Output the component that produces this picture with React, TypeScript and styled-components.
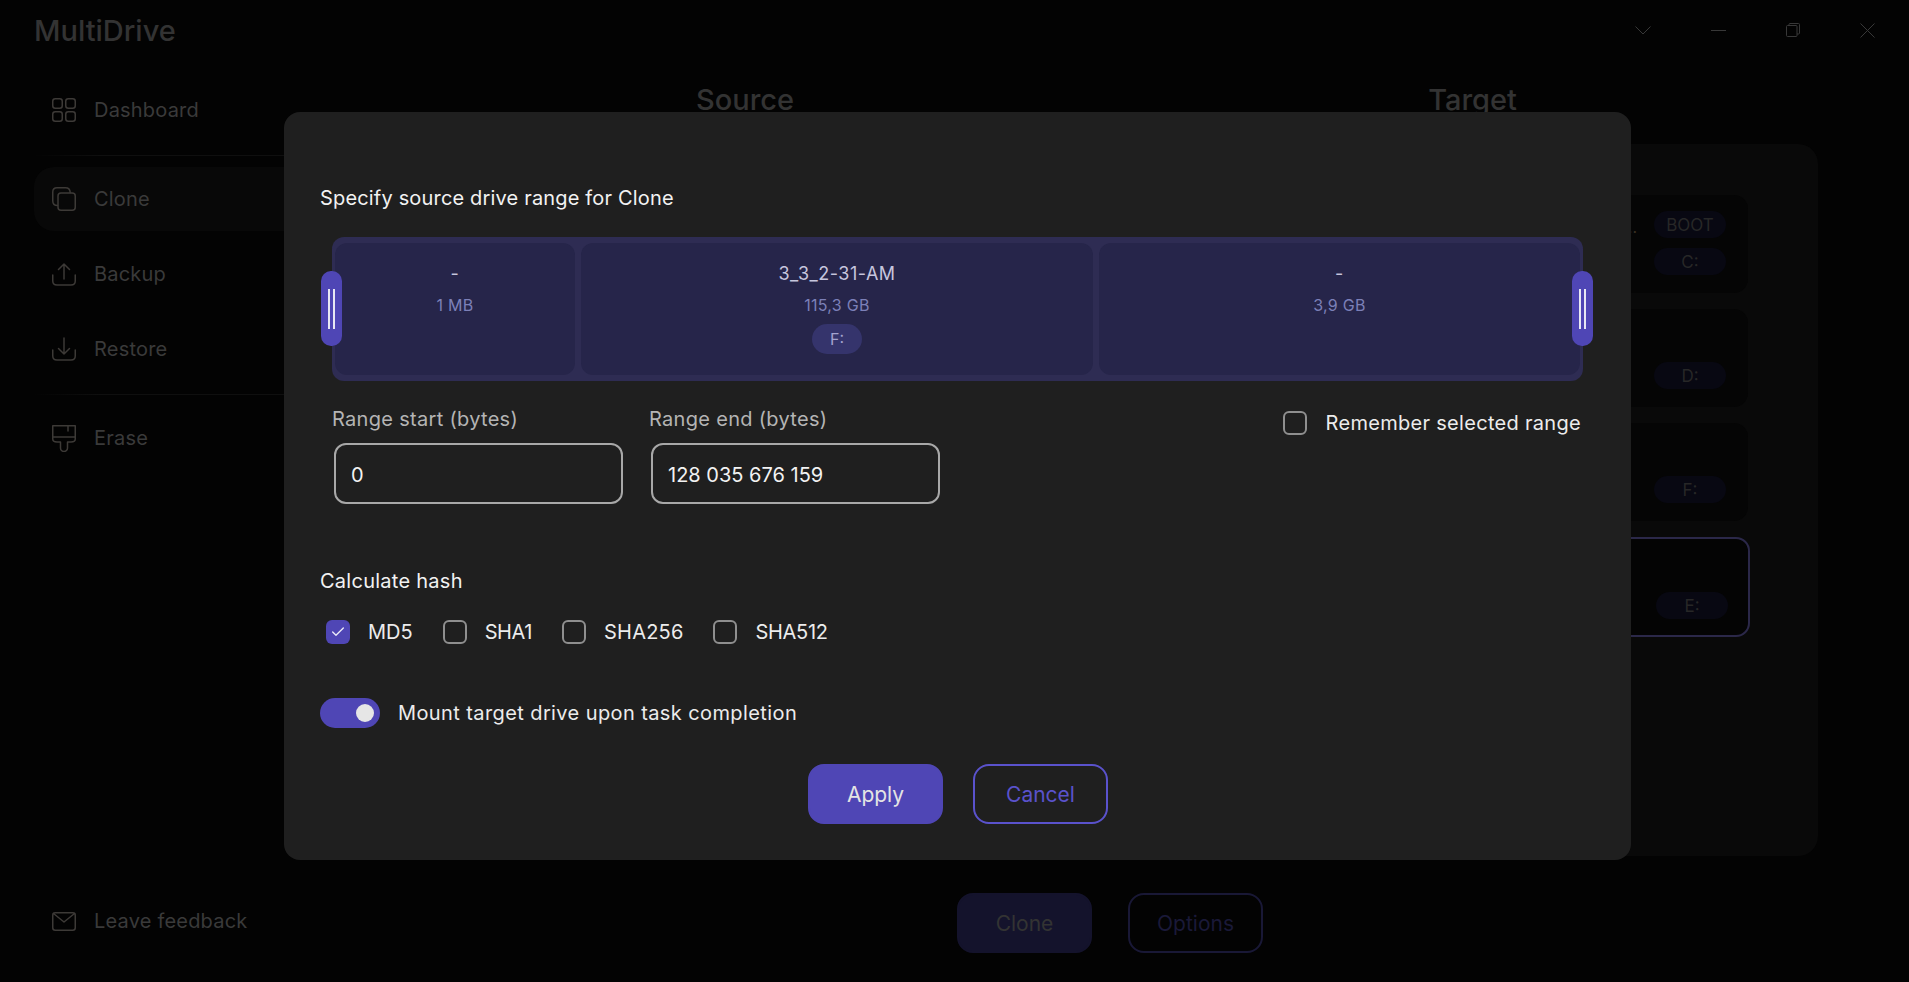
import React from "react";
import styled, { createGlobalStyle } from "styled-components";
import { Check } from "lucide-react";

const font = `"Inter", "Noto Sans", sans-serif`;

const Global = createGlobalStyle`
  html, body { margin: 0; padding: 0; background: #030303; }
  body { font-family: ${font}; color: #f0f0f0; overflow: hidden; }
  * { box-sizing: border-box; }
`;

const Page = styled.div`
  position: relative;
  width: 1909px;
  height: 982px;
  display: flex;
  flex-direction: column;
  background: #030303;
  overflow: hidden;
`;

const TitleBar = styled.header`
  height: 60px;
  display: flex;
  align-items: center;
  padding-left: 34px;
  flex: none;
`;

const Brand = styled.div`
  font-size: 29px;
  font-weight: 500;
  color: #333333;
  flex: 1;
`;

const WindowButtons = styled.div`
  display: flex;
  align-items: center;
  gap: 60px;
  padding-right: 34px;
`;

const WindowIcon = styled.svg`
  flex: none;
  fill: none;
  stroke: #383838;
  stroke-width: 1;
`;

const Body = styled.div`
  flex: 1;
  display: flex;
  min-height: 0;
`;

const Sidebar = styled.nav`
  width: 300px;
  flex: none;
  display: flex;
  flex-direction: column;
  padding: 25px 0 36px 34px;
`;

const NavRow = styled.div<{ $active?: boolean; $gapBelow?: number; $gapAbove?: number }>`
  height: ${(p) => (p.$active ? 64 : 50)}px;
  display: flex;
  align-items: center;
  gap: 18px;
  padding-left: 18px;
  font-size: 20px;
  letter-spacing: 0.2px;
  color: #3a3a3a;
  border-radius: 20px 0 0 20px;
  background: ${(p) => (p.$active ? "#080808" : "transparent")};
  margin-top: ${(p) => p.$gapAbove ?? 0}px;
  margin-bottom: ${(p) => p.$gapBelow ?? 0}px;
`;

const NavIcon = styled.svg`
  flex: none;
  fill: none;
  stroke: #3d3a37;
  stroke-width: 1.5;
  stroke-linecap: round;
  stroke-linejoin: round;
`;

const Divider = styled.div<{ $after: number; $before: number }>`
  height: 1px;
  background: linear-gradient(90deg, #030303, #0f0f0f 25%);
  margin: ${(p) => p.$before}px 0 ${(p) => p.$after}px 0;
`;

const SidebarSpacer = styled.div`
  flex: 1;
`;

const Main = styled.main`
  flex: 1;
  display: flex;
  flex-direction: column;
`;

const Columns = styled.div`
  display: flex;
  padding-left: 396px;
  gap: 634px;
  height: 84px;
  padding-top: 22px;
`;

const ColumnTitle = styled.h2`
  margin: 0;
  font-size: 29px;
  font-weight: 500;
  color: #333333;
`;

const TargetPanel = styled.section`
  margin-left: 780px;
  width: 738px;
  height: 712px;
  background: #090909;
  border-radius: 20px;
  display: flex;
  flex-direction: column;
  align-items: flex-end;
  gap: 16px;
  padding: 51px 70px 0 0;
`;

const DriveCard = styled.div<{ $selected?: boolean }>`
  width: 500px;
  height: ${(p) => (p.$selected ? 100 : 98)}px;
  margin-right: ${(p) => (p.$selected ? -2 : 0)}px;
  background: ${(p) => (p.$selected ? "#040404" : "#050505")};
  border: 2px solid ${(p) => (p.$selected ? "#2b2849" : "transparent")};
  border-radius: 14px;
  display: flex;
  flex-direction: column;
  align-items: flex-end;
  justify-content: flex-end;
  gap: 10px;
  padding: 0 20px 16px 0;
`;

const PillRow = styled.div`
  display: flex;
  align-items: center;
  gap: 17px;
`;

const Truncated = styled.span`
  font-size: 16px;
  margin-top: 4px;
  color: #3a3024;
`;

const DrivePill = styled.span`
  width: 72px;
  height: 27px;
  border-radius: 14px;
  background: #080812;
  color: #272727;
  font-size: 17px;
  display: flex;
  align-items: center;
  justify-content: center;
`;

const Actions = styled.div`
  margin-top: 37px;
  padding-left: 657px;
  display: flex;
  gap: 36px;
`;

const BackdropButton = styled.button<{ $primary?: boolean }>`
  width: 135px;
  height: 60px;
  border-radius: 16px;
  font-family: ${font};
  font-size: 21px;
  background: ${(p) => (p.$primary ? "#14132c" : "transparent")};
  color: ${(p) => (p.$primary ? "#333333" : "#1a1938")};
  border: 2px solid ${(p) => (p.$primary ? "#14132c" : "#191836")};
`;

const Modal = styled.div`
  position: absolute;
  left: 284px;
  top: 112px;
  width: 1347px;
  height: 748px;
  background: #1f1f1f;
  border-radius: 16px;
  display: flex;
  flex-direction: column;
  padding: 72px 36px 0;
`;

const ModalHeading = styled.div`
  font-size: 20px;
  line-height: 28px;
  letter-spacing: 0.17px;
  color: #f2f2f2;
`;

const Track = styled.div`
  position: relative;
  margin: 25px 12px 0;
  width: 1251px;
  height: 144px;
  padding: 6px 3px;
  background: #2e2c53;
  border-radius: 12px;
  display: flex;
  gap: 6px;
`;

const Cell = styled.div<{ $grow: number }>`
  flex: ${(p) => p.$grow} 0 0;
  background: #26254a;
  border-radius: 12px;
  display: flex;
  flex-direction: column;
  align-items: center;
  padding-top: 19px;
`;

const CellName = styled.div`
  font-size: 18px;
  line-height: 24px;
  letter-spacing: 0.5px;
  color: #c6c6de;
`;

const CellSize = styled.div`
  font-size: 16px;
  line-height: 24px;
  letter-spacing: 0.3px;
  margin-top: 7px;
  color: #7c80b8;
`;

const CellPill = styled.div`
  margin-top: 7px;
  width: 50px;
  height: 30px;
  border-radius: 15px;
  background: #35346c;
  color: #a3a3cf;
  font-size: 16px;
  display: flex;
  align-items: center;
  justify-content: center;
`;

const Handle = styled.div<{ $side: "left" | "right" }>`
  position: absolute;
  top: 34px;
  ${(p) => (p.$side === "left" ? "left: -11px;" : "right: -10px;")}
  width: 21px;
  height: 75px;
  background: #4f46b5;
  border-radius: 10px;
  display: flex;
  align-items: center;
  justify-content: center;
  gap: 3px;
`;

const HandleBar = styled.span`
  width: 2px;
  height: 40px;
  background: #e8e8f4;
`;

const RangeRow = styled.div`
  margin-top: 24px;
  padding: 0 12px;
  display: flex;
  align-items: flex-start;
`;

const Field = styled.div`
  width: 291px;
  margin-right: 26px;
  display: flex;
  flex-direction: column;
`;

const FieldLabel = styled.label`
  font-size: 20px;
  line-height: 28px;
  letter-spacing: 0.3px;
  color: #b4b4b4;
`;

const Input = styled.div`
  margin: 10px 0 0 2px;
  width: 289px;
  height: 61px;
  border: 2px solid #a8a8a8;
  border-radius: 12px;
  padding: 2px 0 0 15px;
  display: flex;
  align-items: center;
  font-size: 20px;
  color: #f2f2f2;
`;

const Remember = styled.div`
  margin-left: auto;
  margin-top: 6px;
  padding-right: 2px;
  display: flex;
  align-items: center;
  gap: 19px;
  font-size: 20px;
  letter-spacing: 0.3px;
  color: #ececec;
`;

const Box = styled.span<{ $checked?: boolean }>`
  flex: none;
  width: 24px;
  height: 24px;
  border-radius: 6px;
  border: ${(p) => (p.$checked ? "none" : "2px solid #8f8f8f")};
  background: ${(p) => (p.$checked ? "#4f46b5" : "transparent")};
  display: flex;
  align-items: center;
  justify-content: center;
  color: #ecebf8;
`;

const HashHeading = styled(ModalHeading)`
  margin-top: 63px;
  letter-spacing: 0.26px;
`;

const HashRow = styled.div`
  margin-top: 25px;
  padding-left: 6px;
  display: flex;
  gap: 30px;
`;

const HashOption = styled.div<{ $tracking?: number }>`
  display: flex;
  align-items: center;
  gap: 18px;
  font-size: 20px;
  line-height: 24px;
  letter-spacing: ${(p) => p.$tracking ?? 0}px;
  color: #ececec;
`;

const ToggleRow = styled.div`
  margin-top: 54px;
  display: flex;
  align-items: center;
  gap: 18px;
  font-size: 20px;
  letter-spacing: 0.4px;
  color: #ececec;
`;

const Toggle = styled.div`
  width: 60px;
  height: 30px;
  border-radius: 15px;
  background: #4f46b5;
  display: flex;
  align-items: center;
  justify-content: flex-end;
  padding-right: 6px;
`;

const Knob = styled.span`
  width: 18px;
  height: 18px;
  border-radius: 50%;
  background: #e6e6e6;
`;

const ModalActions = styled.div`
  margin-top: 36px;
  padding-left: 488px;
  display: flex;
  gap: 30px;
`;

const ModalButton = styled.button<{ $primary?: boolean }>`
  width: 135px;
  height: 60px;
  border-radius: 16px;
  font-family: ${font};
  font-size: 21px;
  background: ${(p) => (p.$primary ? "#4f46b5" : "transparent")};
  color: ${(p) => (p.$primary ? "#e4e4e4" : "#5a52cc")};
  border: 2px solid ${(p) => (p.$primary ? "#4f46b5" : "#5a52cc")};
`;

export default function App() {
  return (
    <Page>
      <Global />
      <TitleBar>
        <Brand>MultiDrive</Brand>
        <WindowButtons>
          <WindowIcon width="16" height="9" viewBox="0 0 16 9">
            <path d="M.5.5 8 8 15.5.5" />
          </WindowIcon>
          <WindowIcon width="15" height="1" viewBox="0 0 15 1">
            <path d="M0 .5h15" />
          </WindowIcon>
          <WindowIcon width="14" height="14" viewBox="0 0 14 14">
            <rect x=".5" y="2.5" width="10.5" height="11" rx="1" />
            <path d="M3 2.5V1.5a1 1 0 0 1 1-1h8.5a1 1 0 0 1 1 1V10a1 1 0 0 1-1 1H11" />
          </WindowIcon>
          <WindowIcon width="15" height="15" viewBox="0 0 15 15">
            <path d="M.5.5l14 14M14.5.5l-14 14" />
          </WindowIcon>
        </WindowButtons>
      </TitleBar>
      <Body>
        <Sidebar>
          <NavRow>
            <NavIcon width="24" height="24" viewBox="0 0 24 24">
              <rect x=".75" y=".75" width="9.5" height="9.5" rx="2.5" />
              <rect x="13.75" y=".75" width="9.5" height="9.5" rx="2.5" />
              <rect x=".75" y="13.75" width="9.5" height="9.5" rx="2.5" />
              <rect x="13.75" y="13.75" width="9.5" height="9.5" rx="2.5" />
            </NavIcon>
            Dashboard
          </NavRow>
          <Divider $before={20} $after={11} />
          <NavRow $active>
            <NavIcon width="24" height="24" viewBox="0 0 24 24">
              <path d="M5.5 18.5C2.5 18.5.75 16.5.75 14V5C.75 2.5 2.5.75 5 .75h8.5c2.5 0 4.5 1.75 4.7 4.75" />
              <rect x="6" y="6" width="17.25" height="17.25" rx="3" />
            </NavIcon>
            Clone
          </NavRow>
          <NavRow $gapAbove={18} $gapBelow={25}>
            <NavIcon width="24" height="23" viewBox="0 0 24 23">
              <path d="M12 16V1M6.5 6.5 12 1l5.5 5.5" />
              <path d="M.75 12v6c0 2.5 1.75 4 4.25 4h14c2.5 0 4.25-1.5 4.25-4v-6" />
            </NavIcon>
            Backup
          </NavRow>
          <NavRow>
            <NavIcon width="24" height="24" viewBox="0 0 24 24">
              <path d="M12 1v16M6.5 11.5 12 17l5.5-5.5" />
              <path d="M.75 13v6c0 2.5 1.75 4 4.25 4h14c2.5 0 4.25-1.5 4.25-4v-6" />
            </NavIcon>
            Restore
          </NavRow>
          <Divider $before={20} $after={18} />
          <NavRow>
            <NavIcon width="24" height="27" viewBox="0 0 24 27">
              <path d="M.75.75h22.5V14c0 2.5-1.75 3-4.25 3h-3.5v6a3.5 3.5 0 0 1-7 0v-6H5c-2.5 0-4.25-.5-4.25-3Z" />
              <path d="M.75 12h22.5M16 .75V6" />
            </NavIcon>
            Erase
          </NavRow>
          <SidebarSpacer />
          <NavRow>
            <NavIcon width="24" height="19" viewBox="0 0 24 19">
              <rect x=".75" y=".75" width="22.5" height="17.5" rx="2.5" />
              <path d="M1.5 1.5 12 10l10.5-8.5" />
            </NavIcon>
            Leave feedback
          </NavRow>
        </Sidebar>
        <Main>
          <Columns>
            <ColumnTitle>Source</ColumnTitle>
            <ColumnTitle>Target</ColumnTitle>
          </Columns>
          <TargetPanel>
            <DriveCard>
              <PillRow>
                <Truncated>...</Truncated>
                <DrivePill>BOOT</DrivePill>
              </PillRow>
              <DrivePill>C:</DrivePill>
            </DriveCard>
            <DriveCard>
              <DrivePill>D:</DrivePill>
            </DriveCard>
            <DriveCard>
              <DrivePill>F:</DrivePill>
            </DriveCard>
            <DriveCard $selected>
              <DrivePill>E:</DrivePill>
            </DriveCard>
          </TargetPanel>
          <Actions>
            <BackdropButton $primary>Clone</BackdropButton>
            <BackdropButton>Options</BackdropButton>
          </Actions>
        </Main>
      </Body>
      <Modal>
        <ModalHeading>Specify source drive range for Clone</ModalHeading>
        <Track>
          <Handle $side="left">
            <HandleBar />
            <HandleBar />
          </Handle>
          <Cell $grow={240}>
            <CellName>-</CellName>
            <CellSize>1 MB</CellSize>
          </Cell>
          <Cell $grow={512}>
            <CellName>3_3_2-31-AM</CellName>
            <CellSize>115,3 GB</CellSize>
            <CellPill>F:</CellPill>
          </Cell>
          <Cell $grow={481}>
            <CellName>-</CellName>
            <CellSize>3,9 GB</CellSize>
          </Cell>
          <Handle $side="right">
            <HandleBar />
            <HandleBar />
          </Handle>
        </Track>
        <RangeRow>
          <Field>
            <FieldLabel>Range start (bytes)</FieldLabel>
            <Input>0</Input>
          </Field>
          <Field>
            <FieldLabel>Range end (bytes)</FieldLabel>
            <Input>128 035 676 159</Input>
          </Field>
          <Remember>
            <Box />
            Remember selected range
          </Remember>
        </RangeRow>
        <HashHeading>Calculate hash</HashHeading>
        <HashRow>
          <HashOption>
            <Box $checked>
              <Check size={16} strokeWidth={2} />
            </Box>
            MD5
          </HashOption>
          <HashOption $tracking={-0.4}>
            <Box />
            SHA1
          </HashOption>
          <HashOption $tracking={0.2}>
            <Box />
            SHA256
          </HashOption>
          <HashOption $tracking={-0.3}>
            <Box />
            SHA512
          </HashOption>
        </HashRow>
        <ToggleRow>
          <Toggle>
            <Knob />
          </Toggle>
          Mount target drive upon task completion
        </ToggleRow>
        <ModalActions>
          <ModalButton $primary>Apply</ModalButton>
          <ModalButton>Cancel</ModalButton>
        </ModalActions>
      </Modal>
    </Page>
  );
}
